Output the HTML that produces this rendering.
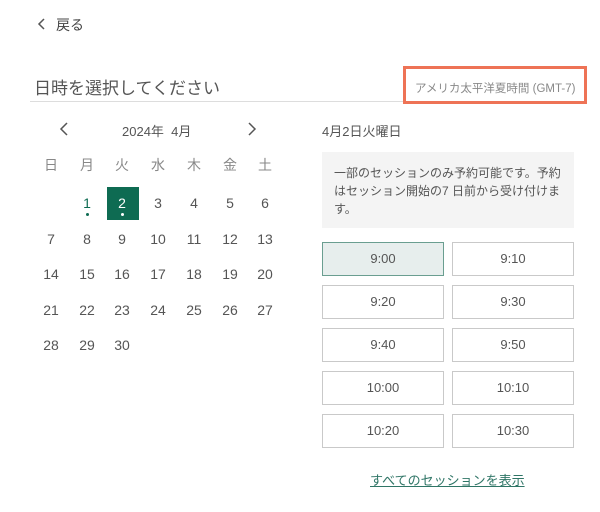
<!DOCTYPE html>
<html><head><meta charset="utf-8"><style>
*{margin:0;padding:0;box-sizing:border-box}
body{width:600px;height:512px;background:#fff;font-family:"Liberation Sans","Noto Sans CJK JP",sans-serif;color:#555;position:relative;overflow:hidden}
.a{position:absolute;white-space:nowrap}
.c{position:absolute;width:36px;text-align:center;font-size:14px;color:#555}
.b{position:absolute;width:122px;height:34px;border:1px solid #c9c9c9;text-align:center;line-height:32px;font-size:13px;color:#555;background:#fff}
</style></head><body>
<svg class="a" style="left:37px;top:17px" width="10" height="14"><path d="M7 2 L2 7 L7 12" stroke="#555" stroke-width="1.5" fill="none"/></svg>
<div class="a" style="left:56px;top:15px;font-size:14px;color:#444">戻る</div>
<div class="a" style="left:34px;top:74px;font-size:17px;color:#555">日時を選択してください</div>
<div class="a" style="left:30px;top:101px;width:374px;height:1px;background:#ddd"></div>
<div class="a" style="left:403px;top:66px;width:184px;height:38px;border:3px solid #ee7356"></div>
<div class="a" style="left:415px;top:80px;font-size:11.5px;color:#888">アメリカ太平洋夏時間 (GMT-7)</div>
<svg class="a" style="left:58px;top:121px" width="12" height="16"><path d="M9 2 L3 8 L9 14" stroke="#555" stroke-width="1.5" fill="none"/></svg>
<div class="a" style="left:122px;top:121px;font-size:13px;color:#555">2024年&nbsp;&nbsp;4月</div>
<svg class="a" style="left:246px;top:121px" width="12" height="16"><path d="M3 2 L9 8 L3 14" stroke="#555" stroke-width="1.5" fill="none"/></svg>
<div class="a" style="left:322px;top:121px;font-size:13px;color:#555">4月2日火曜日</div>
<div class="a" style="left:107px;top:187px;width:32px;height:33px;background:#0e6b52"></div>
<div class="c" style="left:33px;top:155px;color:#888">日</div><div class="c" style="left:69px;top:155px;color:#888">月</div><div class="c" style="left:104px;top:155px;color:#888">火</div><div class="c" style="left:140px;top:155px;color:#888">水</div><div class="c" style="left:176px;top:155px;color:#888">木</div><div class="c" style="left:212px;top:155px;color:#888">金</div><div class="c" style="left:247px;top:155px;color:#888">土</div>
<div class="c" style="left:69px;top:195px;color:#0e6b52">1</div><div class="c" style="left:104px;top:195px;color:#fff">2</div><div class="c" style="left:140px;top:195px">3</div><div class="c" style="left:176px;top:195px">4</div><div class="c" style="left:212px;top:195px">5</div><div class="c" style="left:247px;top:195px">6</div>
<div class="a" style="left:86px;top:213px;width:3px;height:3px;border-radius:50%;background:#0e6b52"></div>
<div class="a" style="left:121px;top:213px;width:3px;height:3px;border-radius:50%;background:#fff"></div>
<div class="c" style="left:33px;top:231px">7</div><div class="c" style="left:69px;top:231px">8</div><div class="c" style="left:104px;top:231px">9</div><div class="c" style="left:140px;top:231px">10</div><div class="c" style="left:176px;top:231px">11</div><div class="c" style="left:212px;top:231px">12</div><div class="c" style="left:247px;top:231px">13</div>
<div class="c" style="left:33px;top:266px">14</div><div class="c" style="left:69px;top:266px">15</div><div class="c" style="left:104px;top:266px">16</div><div class="c" style="left:140px;top:266px">17</div><div class="c" style="left:176px;top:266px">18</div><div class="c" style="left:212px;top:266px">19</div><div class="c" style="left:247px;top:266px">20</div>
<div class="c" style="left:33px;top:302px">21</div><div class="c" style="left:69px;top:302px">22</div><div class="c" style="left:104px;top:302px">23</div><div class="c" style="left:140px;top:302px">24</div><div class="c" style="left:176px;top:302px">25</div><div class="c" style="left:212px;top:302px">26</div><div class="c" style="left:247px;top:302px">27</div>
<div class="c" style="left:33px;top:337px">28</div><div class="c" style="left:69px;top:337px">29</div><div class="c" style="left:104px;top:337px">30</div>
<div class="a" style="left:322px;top:152px;width:252px;height:76px;background:#f4f4f4"></div>
<div class="a" style="left:334px;top:164px;font-size:12px;line-height:18px;color:#555;white-space:normal;width:232px">一部のセッションのみ予約可能です。予約はセッション開始の7 日前から受け付けます。</div>
<div class="b" style="left:322px;top:242px;background:#e7eeed;border-color:#6a9e90">9:00</div><div class="b" style="left:452px;top:242px">9:10</div>
<div class="b" style="left:322px;top:285px">9:20</div><div class="b" style="left:452px;top:285px">9:30</div>
<div class="b" style="left:322px;top:328px">9:40</div><div class="b" style="left:452px;top:328px">9:50</div>
<div class="b" style="left:322px;top:371px">10:00</div><div class="b" style="left:452px;top:371px">10:10</div>
<div class="b" style="left:322px;top:414px">10:20</div><div class="b" style="left:452px;top:414px">10:30</div>
<div class="a" style="left:370px;top:470px;font-size:13px;color:#2f7566;text-decoration:underline">すべてのセッションを表示</div>
</body></html>
